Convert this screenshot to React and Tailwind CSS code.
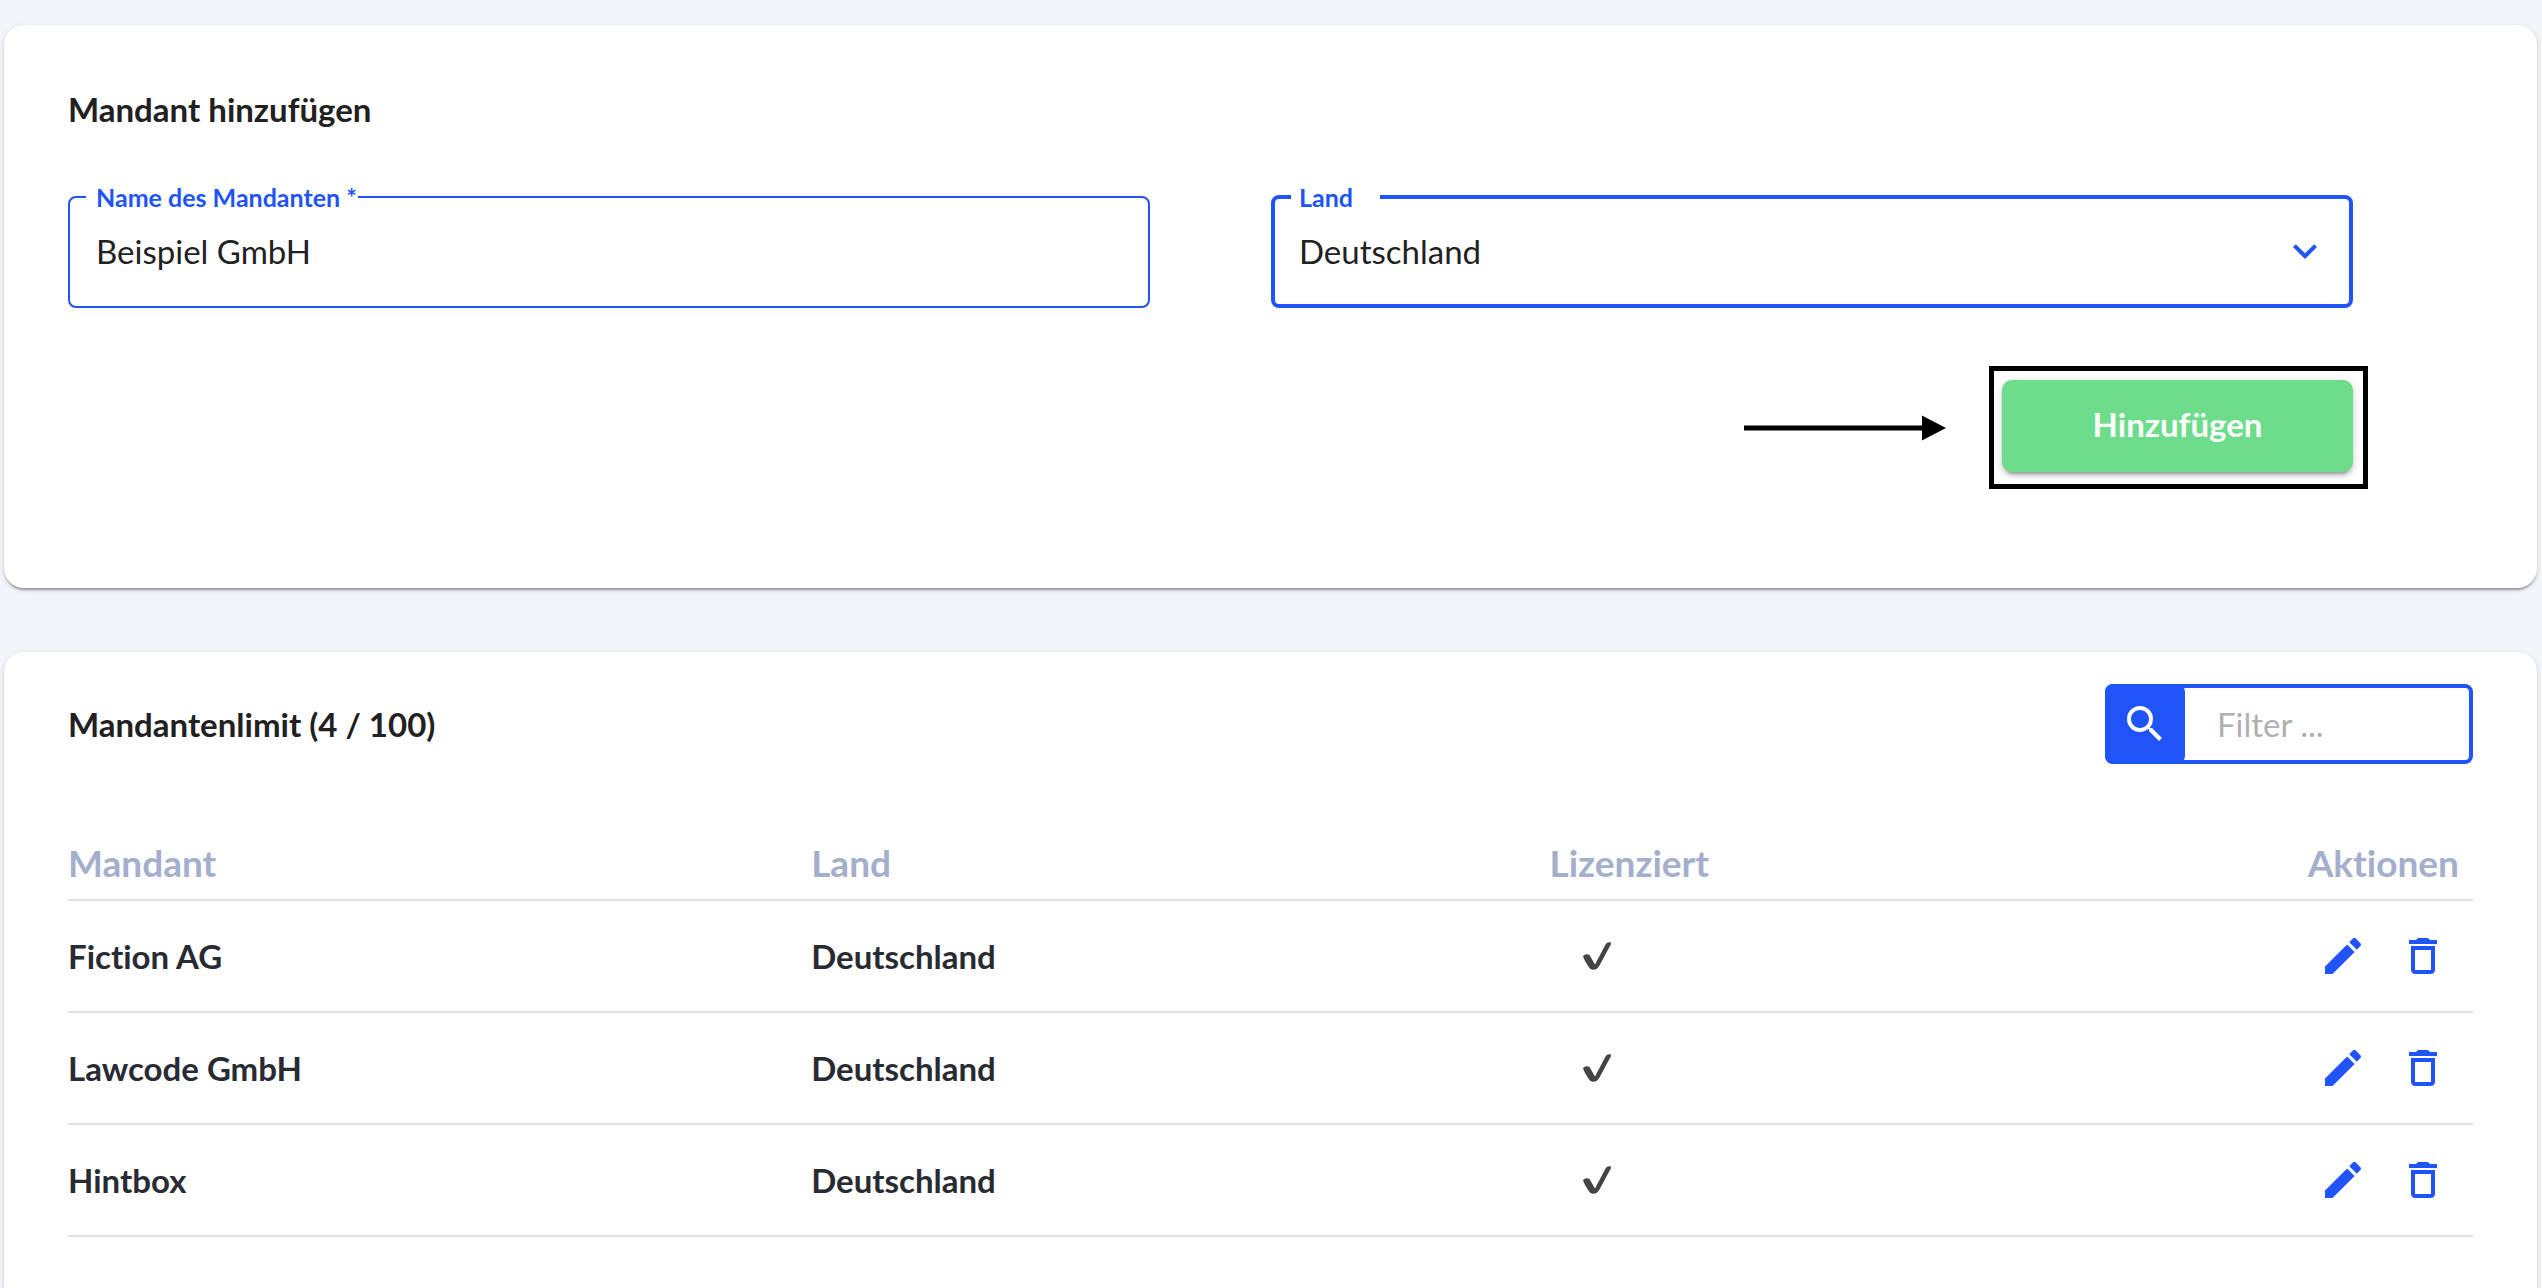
import { useState } from 'react';
import { MdDeleteOutline, MdEdit, MdExpandMore, MdSearch } from 'react-icons/md';

const mandanten = [
  { name: 'Fiction AG', land: 'Deutschland', lizenziert: true },
  { name: 'Lawcode GmbH', land: 'Deutschland', lizenziert: true },
  { name: 'Hintbox', land: 'Deutschland', lizenziert: true },
];

const cardShadow =
  'shadow-[0_4px_2px_-2px_rgba(0,0,0,0.2),0_2px_2px_0_rgba(0,0,0,0.14),0_2px_6px_0_rgba(0,0,0,0.12)]';

function CheckMark() {
  return (
    <svg viewBox="0 0 28 28" className="ml-[34px] size-7" role="img" aria-label="Ja">
      <path
        d="M0 14.5C1 12.3 4.800 11.500 6.500 13L12 22.500L22.500 2.500C23.500 .6 26 -.1 28 .4L27.800 2.500L16.500 23.500C14.500 28.300 8.500 28.800 6.500 26C4 22.500 1.500 18.500 0 14.500Z"
        fill="#444444"
      />
    </svg>
  );
}

export default function App() {
  const [name, setName] = useState('Beispiel GmbH');
  const [land, setLand] = useState('Deutschland');
  const [filter, setFilter] = useState('');

  const rows = mandanten.filter((m) => m.name.toLowerCase().includes(filter.toLowerCase()));

  return (
    <main className="flex min-h-screen flex-col gap-16 bg-[#f4f5fb] pt-[25px] pr-[5px] pl-1 font-['Lato',sans-serif] text-[33px] leading-10 text-[#212121] [font-variant-ligatures:none]">
      <section className={`rounded-[20px] bg-white pt-16 pr-[184px] pb-[99px] pl-16 ${cardShadow}`}>
        <h2 className="font-bold">Mandant hinzufügen</h2>

        <form onSubmit={(e) => e.preventDefault()}>
          <div className="mt-14 grid grid-cols-2 gap-[121px]">
            <fieldset className="h-[123px] min-w-0 rounded-lg border-2 border-[#2154f8] px-4">
              <legend className="w-[272px] px-[10px] text-[25px] leading-6 font-bold whitespace-nowrap text-[#2154f8]">
                <label htmlFor="name">Name des Mandanten *</label>
              </legend>
              <input
                id="name"
                type="text"
                required
                className="h-[84px] w-full px-[10px] outline-none"
                value={name}
                onChange={(e) => setName(e.target.value)}
              />
            </fieldset>

            <fieldset className="h-[123px] min-w-0 rounded-lg border-4 border-[#2154f8] px-4">
              <legend className="w-[89px] px-2 text-[25px] leading-6 font-bold text-[#2154f8]">
                <label htmlFor="land">Land</label>
              </legend>
              <div className="flex items-center">
                <select
                  id="land"
                  className="h-[84px] w-full appearance-none px-2 outline-none"
                  value={land}
                  onChange={(e) => setLand(e.target.value)}
                >
                  <option>Deutschland</option>
                  <option>Österreich</option>
                  <option>Schweiz</option>
                </select>
                <MdExpandMore className="pointer-events-none mr-1 size-12 shrink-0 text-[#2154f8]" />
              </div>
            </fieldset>
          </div>

          <div className="mt-[58px] -mr-[15px] flex items-center justify-end gap-[43px]">
            <svg viewBox="0 0 202 26" className="h-[26px] w-[202px]" aria-hidden="true">
              <path d="M0 10.500H178V.5L202 13L178 25.500V15.500H0Z" fill="#000000" />
            </svg>
            <div className="border-[5px] border-black pt-[9px] pr-[10px] pb-3 pl-2">
              <button
                type="submit"
                className="h-[92px] w-[351px] rounded-[10px] bg-[#6ddc8b] pb-1 font-bold text-white shadow-[0_6px_2px_-4px_rgba(0,0,0,0.2),0_4px_4px_0_rgba(0,0,0,0.14),0_2px_10px_0_rgba(0,0,0,0.12)]"
              >
                Hinzufügen
              </button>
            </div>
          </div>
        </form>
      </section>

      <section className={`flex-1 rounded-t-[20px] bg-white px-16 pt-8 ${cardShadow}`}>
        <div className="flex items-center justify-between">
          <h2 className="font-bold">Mandantenlimit (4 / 100)</h2>
          <label className="flex h-20 w-[368px] rounded-lg border-4 border-[#2154f8] bg-white">
            <span className="-my-1 -ml-1 flex w-20 shrink-0 items-center justify-center rounded-lg bg-[#2154f8] text-white">
              <MdSearch className="size-12" />
            </span>
            <input
              type="text"
              aria-label="Filter"
              placeholder="Filter ..."
              className="w-full min-w-0 px-8 outline-none placeholder:text-[#b0b0b0]"
              value={filter}
              onChange={(e) => setFilter(e.target.value)}
            />
          </label>
        </div>

        <table className="mt-[75px] w-full table-fixed text-left font-bold text-[#282b33]">
          <thead>
            <tr className="border-b-2 border-[#e0e0e0] text-[37px] leading-[48px] text-[#a3afcd]">
              <th className="w-[30.9%] pb-3">Mandant</th>
              <th className="w-[30.7%] pb-3">Land</th>
              <th className="pb-3">Lizenziert</th>
              <th className="pr-[14px] pb-3 text-right">Aktionen</th>
            </tr>
          </thead>
          <tbody>
            {rows.map((m) => (
              <tr key={m.name} className="h-28 border-b-2 border-[#e0e0e0]">
                <td>{m.name}</td>
                <td>{m.land}</td>
                <td>{m.lizenziert && <CheckMark />}</td>
                <td>
                  <div className="flex justify-end gap-8 pr-[26px] text-[#2154f8]">
                    <button type="button" aria-label={`${m.name} bearbeiten`}>
                      <MdEdit className="size-12" />
                    </button>
                    <button type="button" aria-label={`${m.name} löschen`}>
                      <MdDeleteOutline className="size-12" />
                    </button>
                  </div>
                </td>
              </tr>
            ))}
          </tbody>
        </table>
      </section>
    </main>
  );
}
